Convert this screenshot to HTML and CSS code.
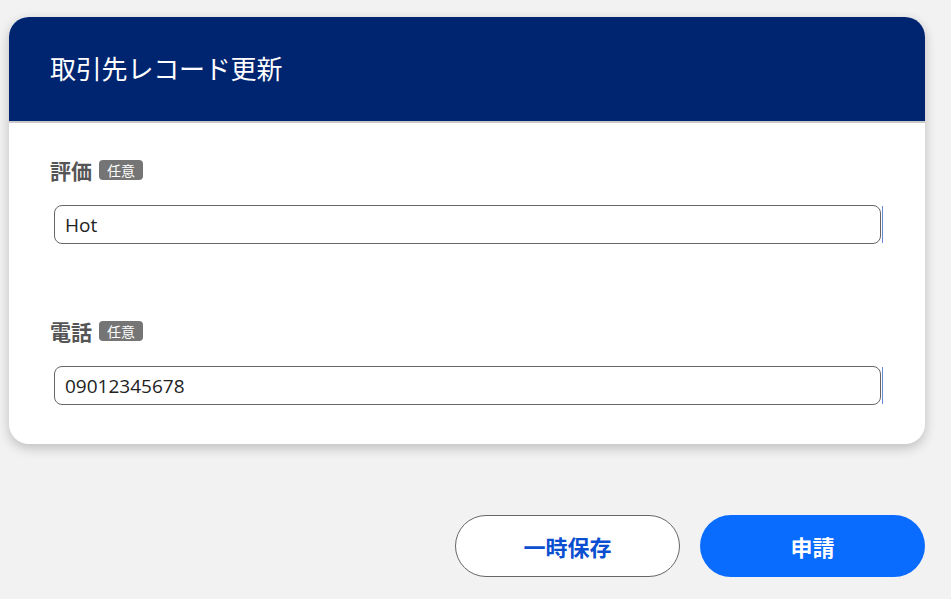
FILE: index.html
```html
<!DOCTYPE html>
<html lang="ja">
<head>
    <meta charset="UTF-8">
    <meta name="viewport" content="width=device-width, initial-scale=1.0">
    <title>取引先レコード更新</title>
    <link rel="stylesheet" href="styles.css">
</head>
<body>
    <div class="page">
        <div class="card">
            <div class="card-header">
                <h1>取引先レコード更新</h1>
            </div>
            <div class="card-body">
                <div class="field">
                    <label class="field-label">評価<span class="badge">任意</span></label>
                    <div class="field-input">
                        <input type="text" value="Hot">
                        <span class="edge"></span>
                    </div>
                </div>
                <div class="field">
                    <label class="field-label">電話<span class="badge">任意</span></label>
                    <div class="field-input">
                        <input type="text" value="09012345678">
                        <span class="edge"></span>
                    </div>
                </div>
            </div>
        </div>
        <div class="actions">
            <button class="btn btn-outline">一時保存</button>
            <button class="btn btn-primary">申請</button>
        </div>
    </div>
</body>
</html>
```

FILE: styles.css
```css
body {
    margin: 0;
    padding: 0;
    background-color: #f2f2f2;
    font-family: "Noto Sans CJK JP", "Noto Sans", sans-serif;
}

.page {
    width: 916px;
    padding: 17px 0 0 9px;
}

.card {
    background-color: white;
    border-radius: 20px;
    box-shadow: 0 4px 12px rgba(0, 0, 0, 0.22);
    overflow: hidden;
}

.card-header {
    height: 104px;
    background-color: #002570;
    border-bottom: 2px solid #c8c8c8;
    display: flex;
    align-items: center;
    padding-left: 41px;
}

.card-header h1 {
    margin: 0;
    color: white;
    font-size: 26px;
    font-weight: 400;
    line-height: 1;
    padding-bottom: 2px;
    letter-spacing: -0.2px;
}

.card-body {
    padding: 32px 42px 39px 41px;
    display: flex;
    flex-direction: column;
    gap: 72px;
}

.field-label {
    display: flex;
    align-items: center;
    gap: 7px;
    color: #555;
    font-size: 21px;
    font-weight: 700;
    line-height: 30px;
}

.badge {
    background-color: #757575;
    color: white;
    font-size: 14px;
    font-weight: 400;
    line-height: 20px;
    padding: 0 8px;
    border-radius: 4px;
}

.field-input {
    display: flex;
    align-items: stretch;
    margin: 20px 0 0 4px;
}

.field-input input {
    flex: 1;
    height: 39px;
    box-sizing: border-box;
    border: 1px solid #666;
    border-radius: 8px;
    padding: 0 10px;
    font-family: "Open Sans", "Noto Sans", sans-serif;
    font-size: 19px;
    color: #222;
    outline: none;
}

.edge {
    width: 1px;
    margin: 1px 0 1px 1px;
    background-color: #6d8ad6;
}

.actions {
    display: flex;
    justify-content: flex-end;
    gap: 20px;
    margin-top: 71px;
}

.btn {
    width: 225px;
    height: 62px;
    border-radius: 31px;
    font-family: "Noto Sans CJK JP", sans-serif;
    font-size: 22px;
    font-weight: 700;
    cursor: pointer;
}

.btn-outline {
    background-color: white;
    border: 1px solid #666;
    color: #0b4fd1;
}

.btn-primary {
    background-color: #0a6bff;
    border: none;
    color: white;
}
```
